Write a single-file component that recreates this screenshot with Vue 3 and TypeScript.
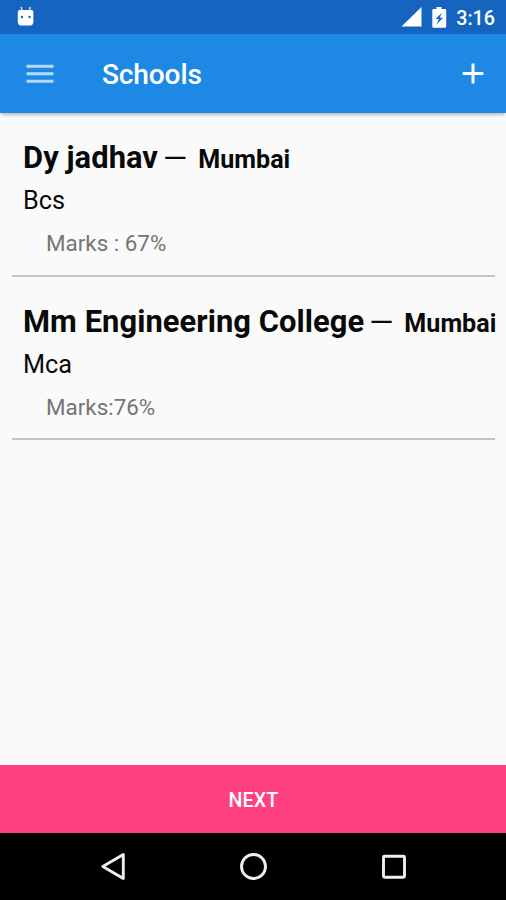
<script setup lang="ts">
interface School {
  name: string
  city: string
  course: string
  marks: string
}

const schools: School[] = [
  { name: 'Dy jadhav', city: 'Mumbai', course: 'Bcs', marks: 'Marks : 67%' },
  { name: 'Mm Engineering College', city: 'Mumbai', course: 'Mca', marks: 'Marks:76%' },
]
</script>

<template>
  <div class="screen">
    <div class="status">
      <svg class="debug" width="18" height="22" viewBox="0 0 18 22">
        <path d="M4.2 .8 5 5M13.2 .8 12.4 5" stroke="#cfe2fa" stroke-width="1.5" fill="none" />
        <path d="M.8 6q0-2 2-2h11.600q2 0 2 2v9.400q0 4.200-4.200 4.200H5Q.8 19.600.8 15.400z" fill="#fff" />
        <circle cx="5" cy="11" r="1.200" fill="#1565c0" />
        <circle cx="12.500" cy="11" r="1.200" fill="#1565c0" />
      </svg>
      <span class="fill"></span>
      <svg class="signal" width="21" height="20" viewBox="0 0 21 20">
        <path d="M0.500 19.500 20.500 0v19.500z" fill="#fff" />
      </svg>
      <svg class="battery" width="15" height="21" viewBox="0 0 15 21">
        <path d="M4.500 0h5v2H13q1.200 0 1.200 1.200v16.300q0 1.200-1.200 1.200H1.500Q.3 20.700.3 19.500V3.200Q.3 2 1.500 2h3z" fill="#fff" />
        <path d="M9.800 5.700 3.500 12h3.300l-2.200 5.500 6.500-6.800H7.800z" fill="#1565c0" />
      </svg>
      <span class="time">3:16</span>
    </div>

    <header class="toolbar">
      <svg width="28" height="22" viewBox="0 0 28 22">
        <path d="M.5 3.300h27M.5 10.800h27M.5 18.300h27" stroke="#b8d8f7" stroke-width="3" />
      </svg>
      <h1>Schools</h1>
      <svg width="22" height="22" viewBox="0 0 22 22">
        <path d="M11 .5v20M.7 10.500h20.600" stroke="#fff" stroke-width="3" />
      </svg>
    </header>

    <main>
      <section v-for="school in schools" :key="school.name" class="school">
        <div class="heading">
          <strong class="name">{{ school.name }}</strong>
          <span class="dash">—</span>
          <strong class="city">{{ school.city }}</strong>
        </div>
        <div class="course">{{ school.course }}</div>
        <div class="marks">{{ school.marks }}</div>
      </section>
    </main>

    <button class="next" type="button">NEXT</button>

    <nav>
      <svg width="28" height="30" viewBox="0 0 28 30">
        <path d="M2.800 14.500 23.300 2.500v24z" fill="none" stroke="#eee" stroke-width="2.900" stroke-linejoin="round" />
      </svg>
      <svg width="28" height="30" viewBox="0 0 28 30">
        <circle cx="13.500" cy="14.500" r="12" fill="none" stroke="#eee" stroke-width="2.900" />
      </svg>
      <svg width="28" height="30" viewBox="0 0 28 30">
        <rect x="3.500" y="4.200" width="21" height="21" rx="1" fill="none" stroke="#eee" stroke-width="2.900" />
      </svg>
    </nav>
  </div>
</template>

<style>
body {
  margin: 0;
}
</style>

<style scoped>
.screen {
  display: flex;
  flex-direction: column;
  width: 506px;
  height: 900px;
  overflow: hidden;
  background: #fafafa;
  color: #0a0a0a;
  font-family: Roboto, sans-serif;
}
svg {
  display: block;
  flex: none;
}
.status {
  display: flex;
  flex: none;
  align-items: flex-start;
  box-sizing: border-box;
  height: 34px;
  padding: 0 11px 0 17px;
  background: #1565c0;
}
.debug {
  margin-top: 6px;
}
.fill {
  flex: 1;
}
.signal {
  margin: 7px 10px 0 0;
}
.battery {
  margin: 7px 9px 0 0;
}
.time {
  color: #fff;
  font-size: 19.7px;
  font-weight: 500;
  line-height: 37px;
}
.toolbar {
  display: flex;
  flex: none;
  align-items: center;
  box-sizing: border-box;
  height: 79px;
  padding: 0 22px 0 26px;
  background: #1e88e5;
  box-shadow: 0 3px 3px -1px rgba(0, 0, 0, 0.25);
}
h1 {
  flex: 1;
  margin: 2px 0 0 48px;
  color: #fff;
  font-size: 28.1px;
  font-weight: 500;
  letter-spacing: -0.15px;
  line-height: 40px;
}
main {
  flex: 1;
  padding: 0 11px 0 12px;
}
.school {
  box-sizing: border-box;
  height: 163.5px;
  padding: 24px 0 0 11px;
  border-bottom: 2px solid #c4c4c4;
  white-space: nowrap;
}
.heading {
  display: flex;
  align-items: baseline;
  height: 43px;
  line-height: 41px;
}
.name {
  font-size: 30.9px;
  font-weight: 700;
  letter-spacing: 0.06px;
}
.dash {
  margin-left: 5px;
  font-size: 31px;
  line-height: 1;
  transform: translateY(1px);
}
.city {
  margin-left: 11px;
  font-size: 25.1px;
  font-weight: 700;
}
.course {
  height: 43px;
  font-size: 25.3px;
  line-height: 42.4px;
}
.marks {
  padding-left: 23px;
  color: #757575;
  font-size: 22.4px;
  line-height: 41.5px;
}
.next {
  flex: none;
  height: 68px;
  padding: 3px 0 0 1px;
  border: 0;
  background: #ff4081;
  color: #fff;
  font: 500 19.7px/65px Roboto, sans-serif;
  letter-spacing: 0.1px;
}
nav {
  display: flex;
  flex: none;
  align-items: flex-start;
  justify-content: center;
  gap: 112px;
  box-sizing: border-box;
  height: 67px;
  padding: 19px 0 0 1px;
  background: #000;
}
</style>
